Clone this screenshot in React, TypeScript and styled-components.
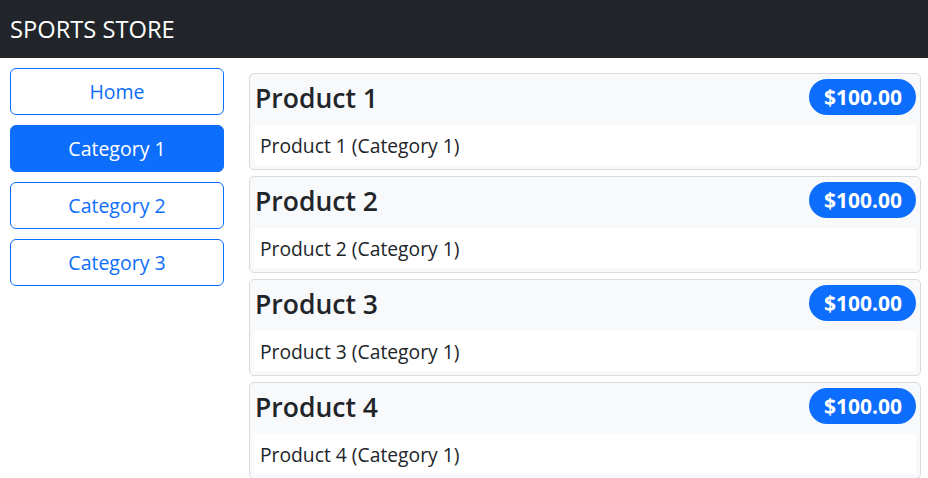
import React from "react";
import styled, { createGlobalStyle } from "styled-components";

const Global = createGlobalStyle`
  html, body { margin: 0; padding: 0; background: #fff; }
  body { font-family: "Open Sans", "Noto Sans", sans-serif; color: #212529; }
  * { box-sizing: border-box; }
`;

const Navbar = styled.header`
  height: 58px;
  background: #212529;
  display: flex;
  align-items: center;
  padding-left: 10px;
`;

const Brand = styled.div`
  color: #fff;
  font-size: 23.7px;
  line-height: 1;
  margin-top: 2px;
`;

const Main = styled.div`
  display: flex;
  padding: 10px 7px 0 10px;
  gap: 25px;
`;

const Sidebar = styled.nav`
  width: 214px;
  flex: none;
  display: flex;
  flex-direction: column;
  gap: 10px;
`;

const NavButton = styled.button<{ $active?: boolean }>`
  height: 47px;
  width: 100%;
  border: 1px solid #0d6efd;
  border-radius: 6px;
  background: ${(p) => (p.$active ? "#0d6efd" : "#fff")};
  color: ${(p) => (p.$active ? "#fff" : "#0d6efd")};
  font-family: inherit;
  font-size: 19.5px;
  cursor: pointer;
`;

const ProductList = styled.section`
  flex: 1;
  display: flex;
  flex-direction: column;
  gap: 6px;
  padding-top: 5px;
`;

const Card = styled.article`
  border: 1px solid #dadbdc;
  border-radius: 5px;
  background: #f8f9fa;
  padding: 4px;
`;

const CardHeader = styled.div`
  height: 47px;
  padding-top: 1px;
  display: flex;
  justify-content: space-between;
  align-items: flex-start;
`;

const Title = styled.h4`
  margin: 0 0 0 1px;
  font-size: 26.5px;
  font-weight: 600;
  line-height: 38px;
  color: #212529;
`;

const Price = styled.span`
  height: 36px;
  padding: 0 14px 0 15px;
  border-radius: 18px;
  background: #0d6efd;
  color: #fff;
  font-weight: 700;
  font-size: 21px;
  line-height: 36px;
`;

const CardBody = styled.div`
  height: 40px;
  background: #fff;
  padding: 5px 6px 3px;
  font-size: 19.3px;
  line-height: 32px;
`;

const categories = ["Home", "Category 1", "Category 2", "Category 3"];
const products = [1, 2, 3, 4];

export default function App() {
  return (
    <>
      <Global />
      <Navbar>
        <Brand>SPORTS STORE</Brand>
      </Navbar>
      <Main>
        <Sidebar>
          {categories.map((c) => (
            <NavButton key={c} $active={c === "Category 1"}>
              {c}
            </NavButton>
          ))}
        </Sidebar>
        <ProductList>
          {products.map((n) => (
            <Card key={n}>
              <CardHeader>
                <Title>Product {n}</Title>
                <Price>$100.00</Price>
              </CardHeader>
              <CardBody>Product {n} (Category 1)</CardBody>
            </Card>
          ))}
        </ProductList>
      </Main>
    </>
  );
}
